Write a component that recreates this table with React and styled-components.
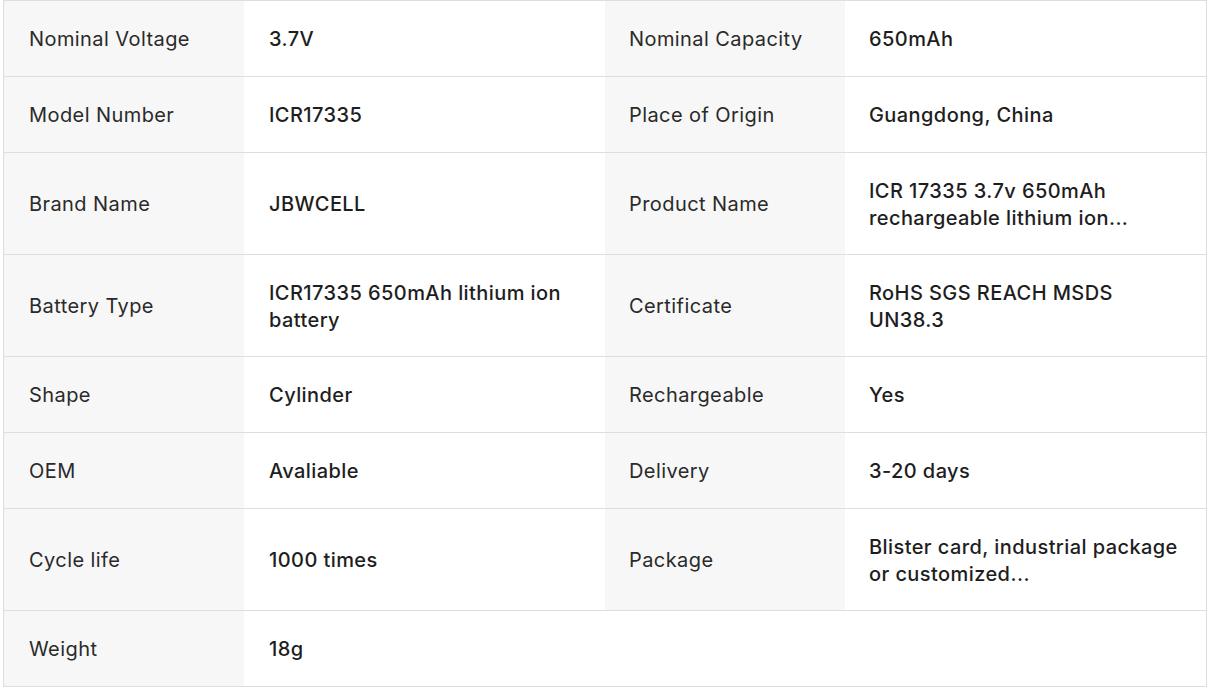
import React from "react";
import styled, { createGlobalStyle } from "styled-components";

const Global = createGlobalStyle`
  html, body { margin: 0; padding: 0; background: #ffffff; }
  body { font-family: Inter, "Noto Sans", sans-serif; color: #222222; }
`;

const Wrap = styled.div`
  padding: 0 6px 0 3px;
`;

const Table = styled.div`
  width: 1204px;
  border: 1px solid #dedede;
  box-sizing: border-box;
`;

const Row = styled.div`
  display: grid;
  grid-template-columns: 240px 361px 240px 361px;
  border-bottom: 1px solid #dedede;
  &:last-child { border-bottom: none; }
`;

const Cell = styled.div`
  box-sizing: border-box;
  min-height: 75px;
  padding: 24.5px 24px 22.5px ${(p) => (p.$right ? "24px" : "25px")};
  display: flex;
  align-items: center;
  font-size: 20px;
  line-height: 27px;
  letter-spacing: 0.42px;
  background: ${(p) => (p.$label ? "#f7f7f7" : "#ffffff")};
  font-weight: ${(p) => (p.$label ? 400 : 500)};
  color: ${(p) => (p.$label ? "#2a2a2a" : "#1e1e1e")};
`;

const rows = [
  ["Nominal Voltage", "3.7V", "Nominal Capacity", "650mAh"],
  ["Model Number", "ICR17335", "Place of Origin", "Guangdong, China"],
  ["Brand Name", "JBWCELL", "Product Name", "ICR 17335 3.7v 650mAh rechargeable lithium ion..."],
  ["Battery Type", "ICR17335 650mAh lithium ion battery", "Certificate", "RoHS SGS REACH MSDS UN38.3"],
  ["Shape", "Cylinder", "Rechargeable", "Yes"],
  ["OEM", "Avaliable", "Delivery", "3-20 days"],
  ["Cycle life", "1000 times", "Package", "Blister card, industrial package or customized..."],
  ["Weight", "18g"],
];

export default function App() {
  return (
    <>
      <Global />
      <Wrap>
        <Table>
          {rows.map((r, i) => (
            <Row key={i}>
              <Cell $label>{r[0]}</Cell>
              <Cell>{r[1]}</Cell>
              {r.length > 2 ? (
                <>
                  <Cell $label $right>{r[2]}</Cell>
                  <Cell $right>{r[3]}</Cell>
                </>
              ) : (
                <>
                  <Cell $right />
                  <Cell $right />
                </>
              )}
            </Row>
          ))}
        </Table>
      </Wrap>
    </>
  );
}
